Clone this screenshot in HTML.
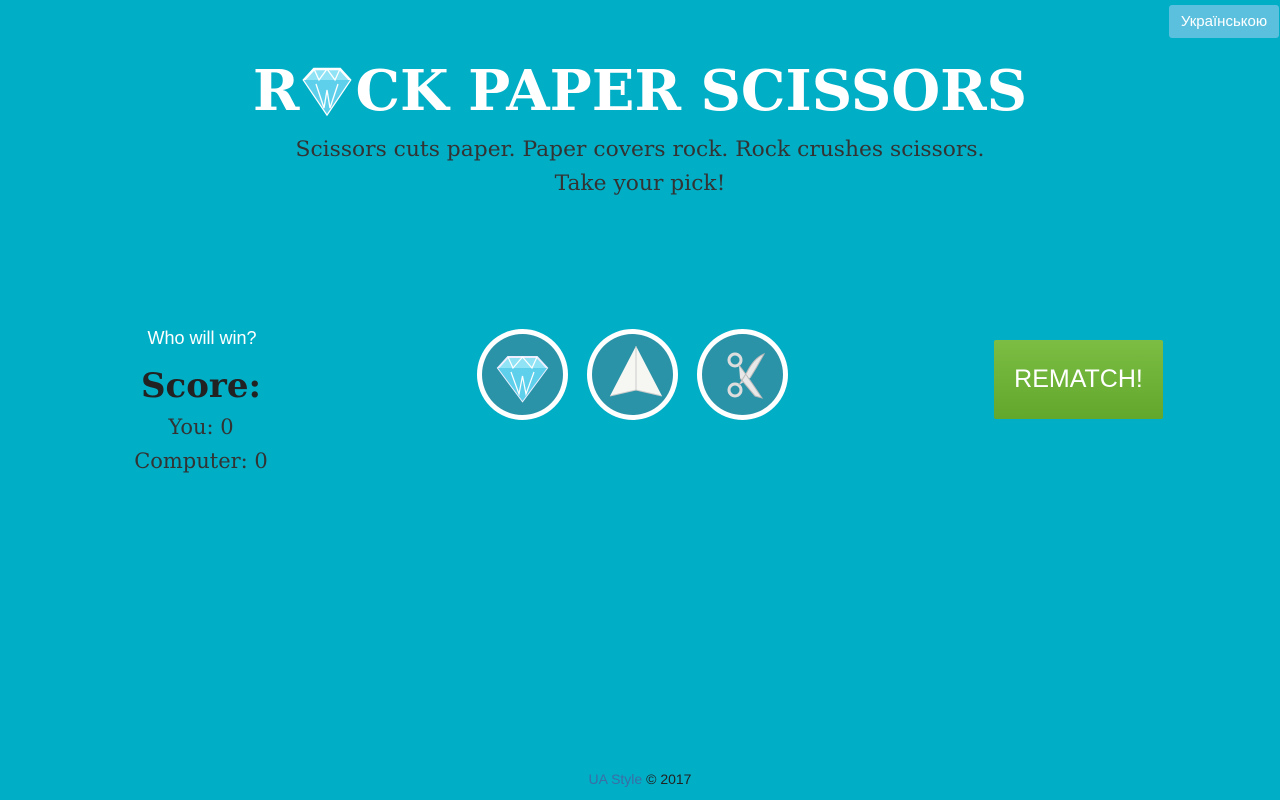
<!DOCTYPE html>
<html><head><meta charset="utf-8"><style>
body{margin:0;width:1280px;height:800px;background:#00aec6;position:relative;overflow:hidden;font-family:"DejaVu Serif","Liberation Serif",serif}
.lang{position:absolute;left:1169px;top:5px;width:110px;height:33px;background:#5bc0de;border-radius:3px;color:#fff;font:15px "Liberation Sans",sans-serif;line-height:33px;text-align:center}
h1{position:absolute;top:58px;left:0;width:1280px;text-align:center;margin:0;font:bold 56px "DejaVu Serif",serif;color:#fff;letter-spacing:0}
.sub{position:absolute;top:133px;width:1280px;text-align:center;font-size:21.8px;color:#333;line-height:34px}
.c{position:absolute;top:329px;width:81px;height:81px;border:5px solid #fff;border-radius:50%;background:#2b93a8}
.who{position:absolute;left:102px;top:328px;width:200px;text-align:center;font:18px "Liberation Sans",sans-serif;color:#fff}
.score{position:absolute;left:101px;top:366px;width:200px;text-align:center;color:#222;font-weight:bold;font-size:34px}
.pts{position:absolute;left:101px;top:410px;width:200px;text-align:center;color:#333;font-size:21px;line-height:34px}
.btn{position:absolute;left:994px;top:340px;width:169px;height:79px;background:linear-gradient(#7cbd44,#62a82c);color:#fff;font:25px "Liberation Sans",sans-serif;line-height:79px;text-align:center;border-radius:2px}
.foot{position:absolute;top:771px;width:1280px;text-align:center;font:14px "Liberation Sans",sans-serif;color:#222}
</style></head><body>
<div class="lang">Українською</div>
<h1>R<svg width="54" height="54" viewBox="0 0 54 54" style="vertical-align:-8px;margin:0 1px"><polygon points="4,16 14,5 40,5 50,16 27,50" fill="#8fe3f5" stroke="#fff" stroke-width="2.5"/><polygon points="4,16 50,16 27,50" fill="#5fd0ec"/><path d="M14 5 L19 16 L27 5 L35 16 L40 5 M16 20 L24 44 L27 26 L30 44 L38 20" stroke="#fff" stroke-width="1.3" fill="none"/></svg>CK PAPER SCISSORS</h1>
<div class="sub">Scissors cuts paper. Paper covers rock. Rock crushes scissors.<br>Take your pick!</div>
<div class="who">Who will win?</div>
<div class="score">Score:</div>
<div class="pts">You: 0<br>Computer: 0</div>
<div class="c" style="left:477px"><svg width="81" height="81" viewBox="0 0 81 81"><polygon points="16,34 26,23 55,23 65,34 40.5,67" fill="#8fe3f5" stroke="#eef" stroke-width="2"/><polygon points="16,34 65,34 40.5,67" fill="#5fd0ec"/><path d="M26 23 L31 34 L40.5 23 L50 34 L55 23 M29 38 L37 60 L40.5 42 L44 60 L52 38" stroke="#fff" stroke-width="1.2" fill="none"/></svg></div>
<div class="c" style="left:587px"><svg width="81" height="81" viewBox="0 0 81 81"><polygon points="44,12 18,62 44,56 70,62" fill="#f6f6f2"/><path d="M44 12 L44 56 L18 62 M44 56 L70 62" stroke="#ccc" stroke-width="1" fill="none"/></svg></div>
<div class="c" style="left:697px"><svg width="81" height="81" viewBox="0 0 81 81"><circle cx="33" cy="26" r="6" fill="none" stroke="#ddd" stroke-width="3"/><circle cx="33" cy="56" r="6" fill="none" stroke="#ddd" stroke-width="3"/><path d="M37 31 Q44 40 60 64 L53 62 L38 44 M37 51 L45 38 Q52 24 62 20 Q55 33 48 44" fill="#e8e8e8" stroke="#bbb" stroke-width="1"/></svg></div>
<div class="btn">REMATCH!</div>
<div class="foot"><span style="color:#3a6ea5">UA Style</span> © 2017</div>
</body></html>
